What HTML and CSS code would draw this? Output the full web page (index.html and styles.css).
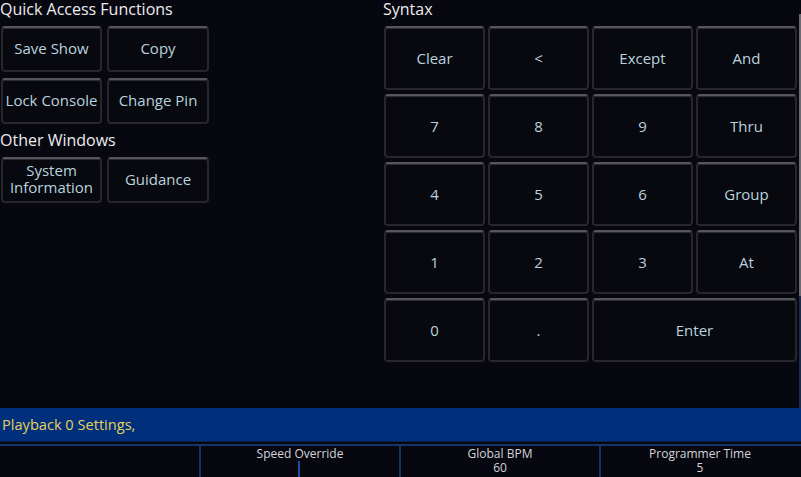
FILE: index.html
```html
<!DOCTYPE html>
<html>
<head>
<meta charset="utf-8">
<link rel="stylesheet" href="styles.css">
</head>
<body>
<div class="screen">
  <div class="main">
    <div class="left">
      <div class="title">Quick Access Functions</div>
      <div class="btn-grid">
        <div class="btn">Save Show</div>
        <div class="btn">Copy</div>
        <div class="btn">Lock Console</div>
        <div class="btn">Change Pin</div>
      </div>
      <div class="title title-2">Other Windows</div>
      <div class="btn-grid">
        <div class="btn two-line">System<br>Information</div>
        <div class="btn">Guidance</div>
      </div>
    </div>
    <div class="right">
      <div class="title syntax-title">Syntax</div>
      <div class="keypad">
        <div class="key">Clear</div>
        <div class="key">&lt;</div>
        <div class="key">Except</div>
        <div class="key">And</div>
        <div class="key">7</div>
        <div class="key">8</div>
        <div class="key">9</div>
        <div class="key">Thru</div>
        <div class="key">4</div>
        <div class="key">5</div>
        <div class="key">6</div>
        <div class="key">Group</div>
        <div class="key">1</div>
        <div class="key">2</div>
        <div class="key">3</div>
        <div class="key">At</div>
        <div class="key">0</div>
        <div class="key">.</div>
        <div class="key wide">Enter</div>
      </div>
    </div>
    <div class="edge"></div>
  </div>
  <div class="playback">Playback 0 Settings,</div>
  <div class="status">
    <div class="cell"></div>
    <div class="cell speed"><span>Speed Override</span><span class="marker"></span></div>
    <div class="cell"><span>Global BPM</span><span>60</span></div>
    <div class="cell"><span>Programmer Time</span><span>5</span></div>
  </div>
</div>
</body>
</html>
```

FILE: styles.css
```css
html, body {
  margin: 0;
  padding: 0;
  background: #07070f;
}
body {
  font-family: "Open Sans", "Noto Sans", sans-serif;
  color: #e6e6ea;
  width: 801px;
  height: 477px;
  overflow: hidden;
}
.screen {
  display: flex;
  flex-direction: column;
  height: 477px;
}
.main {
  display: flex;
  height: 408px;
  position: relative;
}
.left {
  width: 383px;
  display: flex;
  flex-direction: column;
}
.title {
  font-size: 16px;
  line-height: 19px;
  height: 19px;
  color: #ececee;
  margin-bottom: 7px;
  white-space: nowrap;
}
.title-2 {
  margin-top: 7px;
  margin-bottom: 7px;
}
.btn-grid {
  display: grid;
  grid-template-columns: 101px 102px;
  grid-auto-rows: 46px;
  column-gap: 5px;
  row-gap: 6px;
  padding-left: 1px;
}
.btn, .key {
  box-sizing: border-box;
  border: 2px solid #26262c;
  border-top-color: #55555b;
  border-radius: 4px;
  background: #08080f;
  box-shadow: inset 0 1px 0 #2c2c33;
  display: flex;
  align-items: center;
  justify-content: center;
  text-align: center;
  font-size: 15px;
  line-height: 18px;
  color: #b9d3df;
  white-space: nowrap;
}
.btn {
  padding-bottom: 2px;
}
.two-line {
  line-height: 17px;
}
.right {
  width: 416px;
  display: flex;
  flex-direction: column;
}
.keypad {
  display: grid;
  grid-template-columns: repeat(4, 101px);
  grid-auto-rows: 64px;
  column-gap: 3px;
  row-gap: 4px;
  padding-left: 1px;
}
.key.wide {
  grid-column: span 2;
}
.edge {
  position: absolute;
  right: 0;
  top: 0;
  width: 2px;
  height: 408px;
  background: linear-gradient(#07070f 0 14px, #6a6a70 14px 296px, #1a2a4a 296px);
}
.playback {
  height: 33px;
  background: #00307c;
  color: #e6cf5a;
  font-size: 14.6px;
  line-height: 33px;
  padding-left: 2px;
  border-bottom: 1px solid #0a1e48;
}
.status {
  margin-top: 2px;
  border-top: 2px solid #15346a;
  display: grid;
  grid-template-columns: 199px 200px 200px 200px;
  flex: 1;
}
.cell {
  border-left: 2px solid #15346a;
  display: flex;
  flex-direction: column;
  align-items: center;
  font-size: 12px;
  line-height: 14px;
  color: #d4d4da;
  padding-top: 1px;
  position: relative;
}
.cell:first-child {
  border-left: none;
}
.marker {
  position: absolute;
  left: 97px;
  top: 15px;
  width: 2px;
  height: 20px;
  background: #1f4ea0;
}
```
